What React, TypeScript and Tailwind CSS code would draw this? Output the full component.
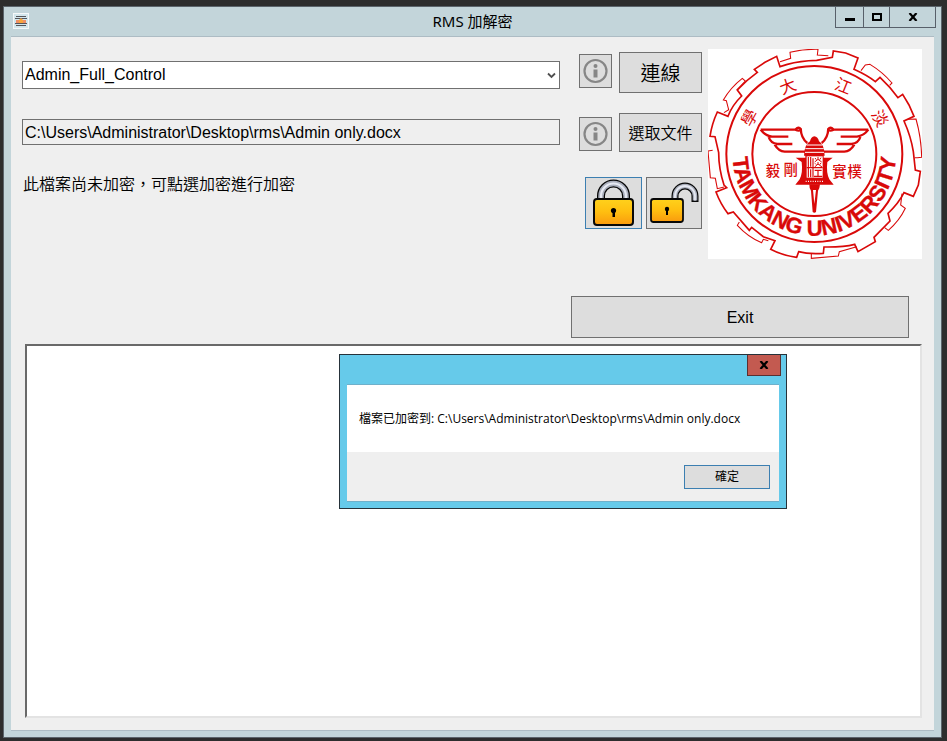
import React, { useState } from 'react';

const cjk = "font-['Liberation_Sans','Noto_Sans_CJK_TC',sans-serif]";
const buttonFace = 'border border-[#707070] bg-[#dddddd] flex items-center justify-center';

function AppIcon() {
  return (
    <svg width="16" height="16" viewBox="0 0 16 16" aria-hidden="true">
      <rect width="16" height="16" fill="#f4f7f8" />
      <rect x="1" y="1" width="14" height="14" fill="#d3e6ec" />
      <path d="M3 3.5H13M2 5.5H14M2 10.500H14M3 12.500H13" stroke="#55555a" strokeWidth="1" />
      <rect x="3" y="7" width="10" height="3" fill="#ee8f66" />
      <path d="M6 10V7L8 5L10 7V10Z" fill="#f8a53c" />
    </svg>
  );
}

function CloseGlyph() {
  return (
    <svg width="10" height="8" viewBox="0 0 10 8" aria-hidden="true">
      <path d="M1.5 0L8.5 8M8.5 0L1.5 8" stroke="#000" strokeWidth="2.2" />
    </svg>
  );
}

function InfoIcon() {
  return (
    <svg width="26" height="26" viewBox="0 0 26 26" aria-hidden="true">
      <circle cx="12.500" cy="13" r="11" fill="none" stroke="#868686" strokeWidth="2.200" />
      <circle cx="12.500" cy="8" r="2" fill="#868686" />
      <path d="M10.500 11.5H14.500V19.500H10.500Z" fill="#868686" />
    </svg>
  );
}

function LockDefs({ id }: { id: string }) {
  return (
    <defs>
      <linearGradient id={id + 'body'} x1="0" y1="0" x2="0" y2="1">
        <stop offset="0" stopColor="#ffd21c" />
        <stop offset="0.5" stopColor="#ffbe10" />
        <stop offset="1" stopColor="#f99a0e" />
      </linearGradient>
    </defs>
  );
}

function LockIcon() {
  const shackle = 'M8 24V17A12.500 12.500 0 0 1 33 17V24';
  return (
    <svg width="42" height="48" viewBox="0 0 42 48" aria-hidden="true">
      <LockDefs id="closed" />
      <path d={shackle} fill="none" stroke="#080808" strokeWidth="8" />
      <path d={shackle} fill="none" stroke="#a9aebb" strokeWidth="5.400" />
      <path d={shackle} fill="none" stroke="#e6e9f2" strokeWidth="2.200" />
      <rect x="1" y="20" width="39" height="26" rx="3" fill="url(#closedbody)" stroke="#080808" strokeWidth="2" />
      <circle cx="20.500" cy="31.500" r="2.600" fill="#000" />
      <path d="M19.500 32H22V38H19.500Z" fill="#000" />
    </svg>
  );
}

function UnlockIcon() {
  return (
    <svg width="50" height="42" viewBox="0 0 50 42" aria-hidden="true">
      <LockDefs id="open" />
      <path d="M26 18V14A10 10 0 0 1 46 14V20" fill="none" stroke="#080808" strokeWidth="7" />
      <path d="M26 18V14A10 10 0 0 1 46 14V18.500" fill="none" stroke="#a9aebb" strokeWidth="4.600" />
      <path d="M26 18V14A10 10 0 0 1 46 14V18.500" fill="none" stroke="#e6e9f2" strokeWidth="1.800" />
      <rect x="2" y="17" width="32" height="23" rx="2.500" fill="url(#openbody)" stroke="#080808" strokeWidth="1.800" />
      <circle cx="18" cy="27" r="2.200" fill="#000" />
      <path d="M17 27H19V33H17Z" fill="#000" />
    </svg>
  );
}

function UniversitySeal() {
  const red = '#d90909';
  return (
    <svg
      className="block h-[210px] w-[214px] shrink-0 bg-white"
      viewBox="24 27 642 630"
      role="img"
      aria-label="Tamkang University"
    >
      <g fill="none" stroke={red} strokeLinejoin="miter">
        <path
          strokeWidth="5"
          d="M163 88L195 67L230 49L240 80L262 73Q300 62 350 61L397 52L400 33L437 39L474 54L462 88Q502 106 526 125L540 112Q572 142 594 173L608 163L627 195L642 229L612 243Q633 290 640 335L646 390L661 394L655 435L640 469L612 458Q596 490 564 520L570 543L522 592L526 605L474 635L464 613Q430 622 372 621L370 640Q325 643 296 635L290 652Q245 646 212 628L225 602L190 590L155 562L148 571L100 516L84 521Q62 493 48 456L80 443L72 435Q56 385 56 338L45 290L30 289Q36 250 52 216L84 229Q96 196 125 168L112 150Q142 118 172 97Z"
        />
        <path
          strokeWidth="3.200"
          d="M240 65L272 55L270 37Q310 27 354 28L352 45L385 47M483 92L496 75L510 73Q548 96 576 129L569 136M72 218L86 209L79 182L70 180Q92 142 127 115L136 123L110 150M624 238L648 237Q664 294 665 352L652 353L644 353M38 331L24 333L31 413L46 415L52 446L72 441M118 546L112 556Q145 592 185 608L190 598L205 602M334 641L334 655L415 648L418 635L470 620M606 461L602 495L616 505Q598 543 565 571L554 563"
        />
        <circle cx="343" cy="342" r="264" strokeWidth="6" />
        <circle cx="343" cy="342" r="186" strokeWidth="6" />
        <g strokeWidth="7" strokeLinejoin="round">
          <path d="M182 269H286Q300 276 302 267Q296 259 287 268M302 265Q303 295 322 309M182 269Q195 287 216 290H265M206 291Q212 310 232 312H277M224 314Q236 334 254 335H318" />
          <path d="M505 269H401Q387 276 385 267Q391 259 400 268M385 265Q384 295 365 309M505 269Q492 287 471 290H422M481 291Q475 310 455 312H410M463 314Q451 334 433 335H369" />
        </g>
      </g>
      <path fill={red} d="M330 304Q333 290 343 289Q354 290 357 304Q373 313 374 347H312Q313 313 330 304Z" />
      <path d="M320 315H367M316 326H371M315 337H372" stroke="#fff" strokeWidth="3" />
      <path fill={red} d="M287 353H316V342H371V353H398L382 366Q378 398 388 418L401 434H286L299 418Q309 398 305 366Z" />
      <path fill="#fff" d="M320 349H368V413H320Z" />
      <path d="M317 424H371" stroke="#fff" strokeWidth="4" strokeDasharray="3 4" />
      <g stroke={red} strokeWidth="3" fill="none">
        <path d="M325 351V412M332 351V380M332 388V412M339 355V412M320 383H368M344 391H365M354 391V408M342 409H367" strokeWidth="3.500" />
        <path d="M354 351V358L344 366M354 358L365 366M345 354L349 359M363 353L359 359M354 366V372L344 381M354 372L366 381M345 370L349 374M363 369L359 374" />
      </g>
      <path fill={red} d="M328 433H360L358 444L354 452L348 516Q343 521 338 516L333 452L329 444Z" />
      <path d="M339 450L343 492L348 450Z" fill="#fff" />
      <defs>
        <path id="seal-arc" d="M98 342A245 245 0 0 0 588 342" />
      </defs>
      <text
        fill={red}
        stroke={red}
        strokeWidth="1"
        fontSize="66"
        className="font-['Liberation_Sans',sans-serif] font-bold"
        textAnchor="middle"
      >
        <textPath href="#seal-arc" startOffset="50%">
          TAMKANG UNIVERSITY
        </textPath>
      </text>
      <g fill={red} fontSize="49" textAnchor="middle" className="font-['Noto_Sans_CJK_TC',sans-serif]">
        <text transform="translate(148 233) rotate(-61)" y="18">學</text>
        <text transform="translate(263 139) rotate(-21)" y="18">大</text>
        <text transform="translate(430 138) rotate(22)" y="18">江</text>
        <text transform="translate(540 235) rotate(61)" y="18">淡</text>
      </g>
      <g fill={red} fontSize="43" textAnchor="middle" className="font-['Noto_Sans_CJK_TC',sans-serif] font-medium">
        <text x="219" y="407">毅</text>
        <text x="272" y="405">剛</text>
        <text x="418" y="412">實</text>
        <text x="464" y="412">樸</text>
      </g>
    </svg>
  );
}

function TitleBar() {
  return (
    <header className="grid h-[29px] grid-cols-[1fr_auto_1fr] items-start">
      <div className="pt-1.5 pl-[9px]">
        <AppIcon />
      </div>
      <h1 className="font-['Noto_Sans','Noto_Sans_CJK_TC',sans-serif] text-[15px] leading-[28px] text-black">RMS 加解密</h1>
      <div className="mr-[5px] flex h-[21px] justify-self-end border-x border-b border-[#58606a]">
        <button type="button" aria-label="Minimize" className="flex w-7 items-center justify-center border-r border-[#58606a]">
          <span className="mt-1 h-[3px] w-2.5 bg-black" />
        </button>
        <button type="button" aria-label="Maximize" className="flex w-[26px] items-center justify-center border-r border-[#58606a]">
          <span className="h-2 w-2.5 border-2 border-black" />
        </button>
        <button type="button" aria-label="Close" className="flex w-[45px] items-center justify-center">
          <CloseGlyph />
        </button>
      </div>
    </header>
  );
}

function MessageDialog({ onClose }: { onClose: () => void }) {
  return (
    <div
      role="dialog"
      aria-label="RMS"
      className="absolute top-2.5 left-[314px] w-[448px] border border-[#26323a] bg-[#66caea] px-[7px] pb-1.5"
    >
      <div className="flex h-[29px] justify-end">
        <button
          type="button"
          aria-label="Close"
          onClick={onClose}
          className="-mr-0.5 flex h-[21px] w-[34px] items-center justify-center border-x border-b border-[#5b2f30] bg-[#c35a50]"
        >
          <CloseGlyph />
        </button>
      </div>
      <div className="border-y border-[#6fb0ca]">
        <p className="bg-white px-3 pt-6 pb-[23px] font-['Open_Sans','Noto_Sans_CJK_TC',sans-serif] text-xs leading-5 whitespace-nowrap text-black">
          檔案已加密到: C:\Users\Administrator\Desktop\rms\Admin only.docx
        </p>
        <div className="flex justify-end bg-[#efefef] px-[9px] pt-[13px] pb-3">
          <button
            type="button"
            onClick={onClose}
            className="h-6 w-[86px] border border-[#3c7fb1] bg-[#dddddd] pb-0.5 font-['Noto_Sans_CJK_TC',sans-serif] text-xs leading-none text-black"
          >
            確定
          </button>
        </div>
      </div>
    </div>
  );
}

export default function App() {
  const [open, setOpen] = useState(true);
  return (
    <div className={`flex min-h-screen bg-[#2d2d2d] pt-1.5 pr-[5px] pb-[3px] pl-[3px] text-black ${cjk}`}>
      <div className="flex flex-1 flex-col border border-[#5b646b] bg-[#c3d5da] pb-1.5">
        <TitleBar />
        <main className="mx-[7px] flex flex-1 flex-col border-y border-[#adbcc4] bg-[#efefef] pt-3 pb-3">
          <div className="flex items-start pr-3 pl-[11px]">
            <div className="flex min-w-0 flex-1 flex-col pt-3">
              <div className="relative">
                <select
                  aria-label="Template"
                  defaultValue="Admin_Full_Control"
                  className="block h-7 w-full appearance-none border border-[#707070] bg-white pr-5 pl-0.5 text-base leading-6"
                >
                  <option>Admin_Full_Control</option>
                </select>
                <svg className="pointer-events-none absolute top-2.5 right-1" width="9" height="9" viewBox="0 0 9 9" aria-hidden="true">
                  <path d="M1 2.500L4.500 6L8 2.500" fill="none" stroke="#505050" strokeWidth="1.800" />
                </svg>
              </div>
              <input
                type="text"
                aria-label="File path"
                readOnly
                value="C:\Users\Administrator\Desktop\rms\Admin only.docx"
                className="mt-[30px] h-[26px] w-full border border-[#707070] bg-[#efefef] px-0.5 pt-0.5 text-base leading-6"
              />
              <p className="mt-7 pl-px text-base leading-6 font-[350]">此檔案尚未加密，可點選加密進行加密</p>
            </div>

            <div className="ml-[19px] w-[123px] shrink-0 pt-[3px]">
              <div className="flex items-start justify-between">
                <button type="button" aria-label="連線 info" className={`mt-0.5 h-[34px] w-[33px] ${buttonFace}`}>
                  <InfoIcon />
                </button>
                <button type="button" className={`h-[41px] w-[83px] pt-0.5 text-xl leading-none font-[350] ${buttonFace}`}>連線</button>
              </div>
              <div className="mt-5 flex items-end justify-between">
                <button type="button" aria-label="選取文件 info" className={`mb-px h-[34px] w-[33px] ${buttonFace}`}>
                  <InfoIcon />
                </button>
                <button type="button" className={`h-[39px] w-[83px] pt-0.5 text-base leading-none font-[350] whitespace-nowrap ${buttonFace}`}>選取文件</button>
              </div>
              <div className="mt-[25px] flex justify-end gap-1">
                <button
                  type="button"
                  aria-label="加密"
                  className="flex h-[52px] w-[57px] items-center justify-center border border-[#3c7fb1] bg-[#dddddd]"
                >
                  <LockIcon />
                </button>
                <button type="button" aria-label="解密" className={`h-[52px] w-14 ${buttonFace}`}>
                  <UnlockIcon />
                </button>
              </div>
            </div>

            <div className="ml-1.5 shrink-0">
              <UniversitySeal />
            </div>
          </div>

          <button type="button" className={`mt-[37px] mr-[25px] h-[42px] w-[338px] self-end pt-0.5 text-base ${buttonFace}`}>
            Exit
          </button>

          <div className="relative mt-1.5 mr-3 ml-3.5 flex flex-1">
            <textarea
              aria-label="Log"
              className="block w-full flex-1 resize-none border-2 border-t-[#696969] border-r-[#e3e3e3] border-b-[#e3e3e3] border-l-[#696969] bg-white"
            />
            {open && <MessageDialog onClose={() => setOpen(false)} />}
          </div>
        </main>
      </div>
    </div>
  );
}
